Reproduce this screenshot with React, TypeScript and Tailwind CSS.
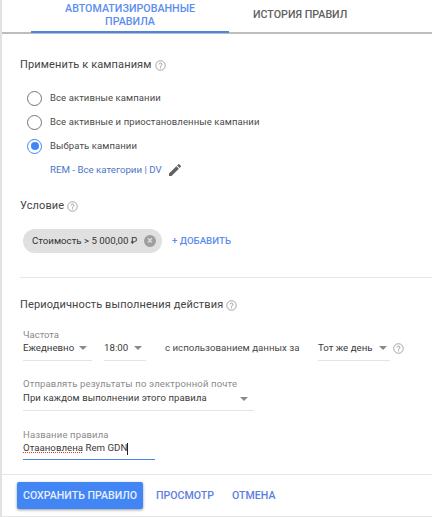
function HelpIcon({ className = '' }: { className?: string }) {
  return (
    <svg viewBox="0 0 12 12" className={`size-[11px] shrink-0 text-[#757575] ${className}`} fill="none" stroke="currentColor">
      <circle cx="6" cy="6" r="5.2" strokeWidth="0.7" />
      <path d="M4.5 4.8a1.5 1.5 0 1 1 2.4 1.2c-.6.4-.9.7-.9 1.3" strokeWidth="0.8" />
      <path d="M6 8.2v1" strokeWidth="0.9" />
    </svg>
  )
}

function Caret({ className = '' }: { className?: string }) {
  return <span className={`h-0 w-0 border-x-[4px] border-t-[4px] border-x-transparent border-t-[#8a8a8a] ${className}`} />
}

function Radio({ label, checked = false }: { label: string; checked?: boolean }) {
  return (
    <div className="flex h-6 items-center gap-2">
      <span className={`flex size-[15px] items-center justify-center rounded-full border-[1.5px] ${checked ? 'border-[#4285f4]' : 'border-[#757575]'}`}>
        {checked && <span className="size-[8px] rounded-full bg-[#4285f4]" />}
      </span>
      <span className="text-[9.5px] tracking-[0.1px] whitespace-nowrap text-[#4a4a4a]">{label}</span>
    </div>
  )
}

function Select({ value, width, caretGap }: { value: string; width: string; caretGap: string }) {
  return (
    <div className={`flex h-[20px] items-center border-b border-[#e4e4e4] pb-[5px] whitespace-nowrap ${width}`}>
      <span className="text-[9.7px] text-[#3a3a3a]">{value}</span>
      <Caret className={caretGap} />
    </div>
  )
}

export default function App() {
  return (
    <div className="h-[517px] w-[432px] overflow-hidden border-l-2 border-[#e2e2e2] bg-white font-['Roboto',sans-serif]">
      <div className="-ml-[2px] flex h-[34px] border-b-2 border-[#bdbdbd] bg-white">
        <div className="ml-[31px] flex h-[33px] w-[198px] items-center justify-center border-b-2 border-[#4a86e8] pb-[1px] text-center text-[10.7px] leading-[13px] font-medium text-[#5b8def]">
          АВТОМАТИЗИРОВАННЫЕ<br />ПРАВИЛА
        </div>
        <div className="ml-[24px] flex h-[31px] items-center text-[10.7px] font-medium text-[#616161]">ИСТОРИЯ ПРАВИЛ</div>
      </div>

      <div className="pl-[18px]">
        <div className="mt-[24px] flex h-[15px] items-center gap-[3px] text-[11px] tracking-[0.12px] text-[#444444]">
          Применить к кампаниям <HelpIcon />
        </div>
        <div className="mt-[13px] ml-[7px]">
          <Radio label="Все активные кампании" />
          <Radio label="Все активные и приостановленные кампании" />
          <Radio label="Выбрать кампании" checked />
          <div className="mt-[1px] ml-[23px] flex h-[22px] items-center gap-[5px]">
            <span className="text-[9.7px] text-[#4a76c8]">REM - Все категории | DV</span>
            <svg viewBox="0 0 24 24" className="size-[16px] text-[#616161]" fill="currentColor">
              <path d="M3 17.25V21h3.75L17.81 9.94l-3.75-3.75L3 17.25zM20.71 7.04a1 1 0 0 0 0-1.41l-2.34-2.34a1 1 0 0 0-1.41 0l-1.83 1.83 3.75 3.75 1.83-1.83z" />
            </svg>
          </div>
        </div>

        <div className="mt-[18px] flex h-[15px] items-center gap-[3px] text-[11px] tracking-[0.12px] text-[#444444]">
          Условие <HelpIcon />
        </div>
        <div className="mt-[15px] flex items-center">
          <div className="ml-[3px] flex h-[24px] w-[139px] items-center rounded-full bg-[#e0e0e0] pl-[9px] whitespace-nowrap">
            <span className="w-[112px] text-[9.7px] text-[#333333]">Стоимость &gt; 5 000,00 ₽</span>
            <span className="flex size-[12px] items-center justify-center rounded-full bg-[#9e9e9e] text-[10px] leading-none font-bold text-[#e0e0e0]">×</span>
          </div>
          <span className="ml-[10px] text-[9.7px] font-medium text-[#5b8def]">+ ДОБАВИТЬ</span>
        </div>
        <div className="mt-[24px] h-px bg-[#e6e6e6]" />

        <div className="mt-[20px] flex h-[15px] items-center gap-[3px] text-[11px] tracking-[0.12px] text-[#444444]">
          Периодичность выполнения действия <HelpIcon />
        </div>

        <div className="mt-[16px] ml-[3px] text-[9.5px] leading-[12px] text-[#8a8a8a]">Частота</div>
        <div className="ml-[3px] flex items-start">
          <Select value="Ежедневно" width="w-[69px]" caretGap="ml-[5px]" />
          <div className="ml-[12px]"><Select value="18:00" width="w-[42px]" caretGap="ml-[6px]" /></div>
          <span className="ml-[19px] flex h-[15px] w-[153px] items-center text-[9.7px] whitespace-nowrap text-[#4a4a4a]">с использованием данных за</span>
          <Select value="Тот же день" width="w-[72px]" caretGap="ml-[6px]" />
          <HelpIcon className="mt-[2px] ml-[3px]" />
        </div>

        <div className="mt-[17px] ml-[3px] w-[231px]">
          <div className="text-[9.5px] leading-[12px] tracking-[0.15px] whitespace-nowrap text-[#8a8a8a]">Отправлять результаты по электронной почте</div>
          <div className="flex h-[21px] items-center justify-between border-b border-[#e4e4e4] pr-[6px] pb-[3px]">
            <span className="text-[9.5px] tracking-[0.1px] whitespace-nowrap text-[#3a3a3a]">При каждом выполнении этого правила</span>
            <Caret />
          </div>
        </div>

        <div className="mt-[18px] ml-[3px] w-[132px] border-b border-[#4a86e8] pb-[3px]">
          <div className="text-[9.5px] leading-[12px] tracking-[0.15px] text-[#8a8a8a]">Название правила</div>
          <div className="flex h-[15px] items-center text-[9.7px] text-[#3a3a3a]">
            <span className="underline decoration-[#e53935] decoration-dotted">Отаановлена</span>
            <span>&nbsp;Rem GDN</span>
            <span className="h-[12px] w-px bg-[#222222]" />
          </div>
        </div>
      </div>

      <div className="mt-[14px] -ml-[2px] flex h-[43px] items-center border-t border-b border-[#e6e6e6] pl-[17px]">
        <button className="h-[27px] w-[126px] rounded-[2px] bg-[#4285f4] text-[10.6px] font-medium text-[#e8f0fe] shadow-[0_1px_3px_rgba(0,0,0,0.4)]">СОХРАНИТЬ ПРАВИЛО</button>
        <button className="ml-[13px] text-[10.6px] font-medium text-[#5b7fe0]">ПРОСМОТР</button>
        <button className="ml-[18px] text-[10.6px] font-medium text-[#5b7fe0]">ОТМЕНА</button>
      </div>
    </div>
  )
}
